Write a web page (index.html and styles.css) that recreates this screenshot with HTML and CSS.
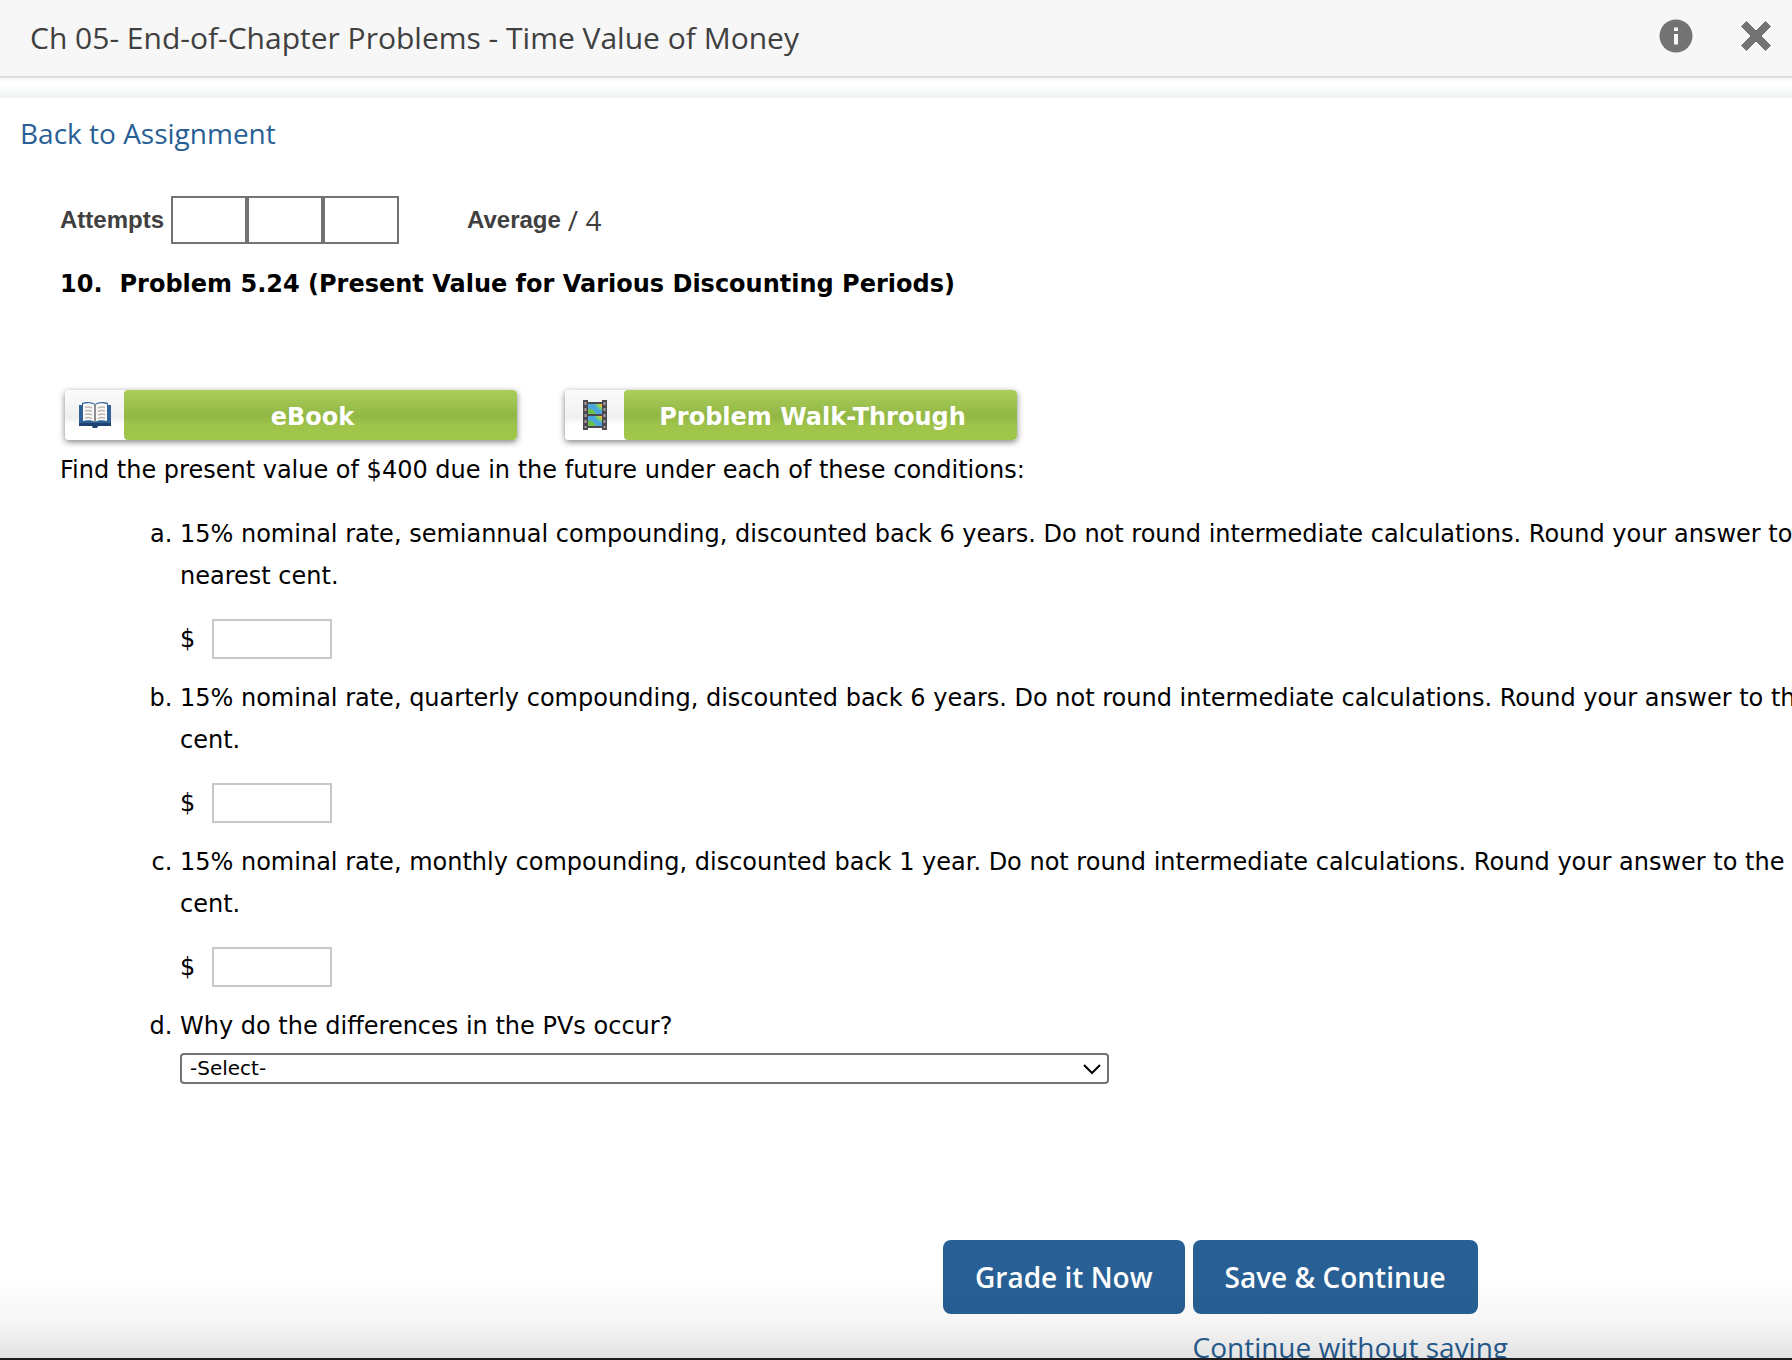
FILE: index.html
```html
<!DOCTYPE html>
<html lang="en">
<head>
<meta charset="utf-8">
<meta name="viewport" content="width=device-width, initial-scale=1">
<title>Ch 05- End-of-Chapter Problems - Time Value of Money</title>
<link rel="stylesheet" href="styles.css">
</head>
<body>
<header class="topbar">
  <h1 class="topbar-title">Ch 05- End-of-Chapter Problems - Time Value of Money</h1>
  <div class="topbar-actions">
    <button class="icon-button" type="button" aria-label="Information">
      <svg width="34" height="34" viewBox="0 0 34 34" aria-hidden="true"><circle cx="17" cy="17" r="16.5" fill="#737373"/><path d="M15 8.500h4v3.500h-4zM15 15h4v10.500h-4z" fill="#f7f7f7"/></svg>
    </button>
    <button class="icon-button" type="button" aria-label="Close">
      <svg width="32" height="32" viewBox="0 0 32 32" aria-hidden="true"><path d="M6.500 1.500 16 11l9.500-9.500 5 5L21 16l9.500 9.500-5 5L16 21l-9.500 9.500-5-5L11 16 1.500 6.500z" fill="#737373" stroke="#737373" stroke-linejoin="round"/></svg>
    </button>
  </div>
</header>
<main class="page">
  <div class="page-shade"></div>
  <nav class="back"><a class="link" href="#">Back to Assignment</a></nav>
  <section class="problem">
    <div class="attempts">
      <span class="score-label">Attempts</span>
      <div class="attempt-boxes"><span class="attempt-box"></span><span class="attempt-box"></span><span class="attempt-box"></span></div>
      <div class="average"><span class="score-label">Average</span><span>/ 4</span></div>
    </div>
    <h2 class="problem-title"><span>10.</span><span>Problem 5.24 (Present Value for Various Discounting Periods)</span></h2>
    <div class="resources">
      <button class="resource" type="button">
        <span class="resource-icon">
          <svg width="34" height="28" viewBox="0 0 34 28" aria-hidden="true"><path d="M1 4h3V2c5-2 10-1 13 1 3-2 8-3 13-1v2h3v20H20l-1 3h-4l-1-3H1z" fill="#2f6299"/><path d="M1 22h32v3H20l-1 2h-4l-1-2H1z" fill="#1d4271"/><path d="M5 3c4-1.500 9-1 12 1 3-2 8-2.500 12-1v17c-4-1-9-1-12 1-3-2-8-2-12-1z" fill="#fbfaf7"/><path d="M17 4v17" stroke="#8c8e91" stroke-width="2"/><path d="M7 6.500q4-1 7 .5M7 10q4-1 7 .5M7 13.500q4-1 7 .5M7 17q4-1 7 .5M20 7q3-1.500 7-.5M20 10.500q3-1.500 7-.5M20 14q3-1.500 7-.5M20 17.500q3-1.500 7-.5" stroke="#bdb8b6" stroke-width="1.500" fill="none"/></svg>
        </span>
        <span class="resource-label">eBook</span>
      </button>
      <button class="resource" type="button">
        <span class="resource-icon">
          <svg width="26" height="32" viewBox="0 0 26 32" aria-hidden="true"><path d="M1 1h5v2h14V1h5v30h-5v-2H6v2H1z" fill="#4c4850"/><path d="M6 5h14v10H6zM6 17h14v10H6z" fill="#4aa6dc"/><path d="M6 10q5-1 8 5H6zM6 22q5-1 8 5H6z" fill="#6cc04a"/><path d="M13 5h7v6q-5-1-7-6zM13 17h7v6q-5-1-7-6z" fill="#74cf73"/><path d="M16 5h4v4zM16 17h4v4z" fill="#e8bd3f"/><path d="M2.500 3h2v3h-2zm0 6h2v3h-2zm0 6h2v3h-2zm0 6h2v3h-2zm0 6h2v2h-2zm19-24h2v3h-2zm0 6h2v3h-2zm0 6h2v3h-2zm0 6h2v3h-2zm0 6h2v2h-2z" fill="#a5a0a5"/></svg>
        </span>
        <span class="resource-label">Problem Walk-Through</span>
      </button>
    </div>
    <p class="prompt">Find the present value of $400 due in the future under each of these conditions:</p>
    <ol class="questions">
      <li class="question">
        <p class="question-text" id="qa">15% nominal rate, semiannual compounding, discounted back 6 years. Do not round intermediate calculations. Round your answer to the<br>nearest cent.</p>
        <label class="answer">$ <input class="answer-input" type="text" aria-describedby="qa"></label>
      </li>
      <li class="question">
        <p class="question-text" id="qb">15% nominal rate, quarterly compounding, discounted back 6 years. Do not round intermediate calculations. Round your answer to the nearest<br>cent.</p>
        <label class="answer">$ <input class="answer-input" type="text" aria-describedby="qb"></label>
      </li>
      <li class="question">
        <p class="question-text" id="qc">15% nominal rate, monthly compounding, discounted back 1 year. Do not round intermediate calculations. Round your answer to the nearest<br>cent.</p>
        <label class="answer">$ <input class="answer-input" type="text" aria-describedby="qc"></label>
      </li>
      <li class="question">
        <label class="question-text" for="reason">Why do the differences in the PVs occur?</label>
        <div class="select-wrap">
          <select class="select" id="reason"><option>-Select-</option></select>
          <svg class="select-arrow" width="20" height="12" viewBox="0 0 20 12" aria-hidden="true"><path d="M2 2l8 8 8-8" fill="none" stroke="#000" stroke-width="2"/></svg>
        </div>
      </li>
    </ol>
  </section>
  <footer class="actions">
    <button class="primary" type="button">Grade it Now</button>
    <button class="primary" type="button">Save &amp; Continue</button>
    <a class="link skip" href="#">Continue without saving</a>
  </footer>
</main>
<div class="bottom-edge"></div>
</body>
</html>
```
FILE: styles.css
```css
* { box-sizing: border-box; }

body {
  margin: 0;
  height: 100vh;
  display: flex;
  flex-direction: column;
  overflow: hidden;
  position: relative;
  background: #fff;
  color: #000;
  font: 24px/42px "DejaVu Sans", Verdana, sans-serif;
}

h1, h2, p, ol { margin: 0; padding: 0; }
button, input, select { font: inherit; margin: 0; }
button { border: 0; padding: 0; cursor: pointer; }

.topbar {
  flex: none;
  display: flex;
  justify-content: space-between;
  align-items: center;
  padding: 17px 20px 17px 30px;
  background: #f7f7f7;
  border-bottom: 2px solid #dcdfde;
}
.topbar-title {
  color: #404040;
  font: 400 30px/42px "Open Sans", sans-serif;
}
.topbar-actions { display: flex; align-items: center; gap: 47px; }
.icon-button { display: flex; background: none; margin-bottom: 4px; }

.page {
  flex: 1;
  min-height: 0;
  overflow: auto;
  scrollbar-width: none;
}
.page-shade { height: 20px; background: linear-gradient(#f3f7f7, #fff 25%, #fcfdfd 50%, #edf2f2); }

.back { display: flex; padding: 14px 20px 0; }
.link {
  color: #286095;
  font: 400 28px/42px "Open Sans", sans-serif;
  text-decoration: none;
}

.problem { padding: 42px 60px 0; }
.attempts { display: flex; align-items: center; }
.score-label {
  color: #404040;
  font: 700 24px/42px "Liberation Sans", Arial, sans-serif;
}
.attempt-boxes { display: flex; margin: 0 68px 0 7px; }
.attempt-box { width: 76px; height: 48px; border: 2px solid #737373; }
.average { display: flex; gap: 7px; color: #404040; font: 400 28px/42px "Open Sans", sans-serif; }

.problem-title {
  display: flex;
  gap: 17px;
  margin-top: 19px;
  font-size: 24px;
  line-height: 42px;
}

.resources { display: flex; gap: 48px; margin: 85px 0 9px 5px; }
.resource {
  display: flex;
  width: 452px;
  height: 50px;
  border-radius: 4px;
  background: #fff;
  box-shadow: 0 2px 6px rgba(0, 0, 0, .5);
  overflow: hidden;
}
.resource-icon {
  width: 59px;
  height: 50px;
  display: grid;
  place-items: center;
  background: linear-gradient(#fbfbfb, #f0f0f0 55%, #fff 70%);
}
.resource-label {
  flex: 1;
  color: #fff;
  font-weight: 700;
  line-height: 54px;
  padding-right: 16px;
  border-radius: 4px;
  background: linear-gradient(#abce5b, #92b744 52%, #9fc44b 70%, #9fc74b);
}

.questions { margin-top: 22px; padding-left: 120px; list-style: lower-alpha; }
.question { margin-bottom: 18px; }
.question-text { white-space: nowrap; }
.answer { display: flex; align-items: center; gap: 17px; height: 40px; margin-top: 22px; width: max-content; }
.answer-input { width: 120px; height: 40px; padding: 0 8px; border: 2px solid #c8c8c8; border-radius: 0; background: #fff; }

.select-wrap { position: relative; width: 929px; margin-top: 6px; }
.select {
  display: block;
  width: 100%;
  height: 31px;
  padding: 0 8px;
  appearance: none;
  border: 2px solid #737373;
  border-radius: 4px;
  background: #fff;
  color: #000;
  font-size: 20px;
  line-height: 27px;
}
.select-arrow { position: absolute; right: 7px; top: 10px; pointer-events: none; }

.actions {
  display: grid;
  grid-template-columns: max-content max-content;
  gap: 12px 8px;
  padding: 138px 0 14px 943px;
}
.primary {
  height: 74px;
  padding: 0 32px;
  border-radius: 8px;
  background: #286095;
  color: #fff;
  font: 600 28px/42px "Open Sans", sans-serif;
}
.skip { grid-column: 2; width: 0; white-space: nowrap; }

/* The fade lies over the scrolled content at the window's foot. */
.bottom-edge {
  position: absolute;
  inset: auto 0 0;
  height: 84px;
  border-bottom: 2px solid #1c1a1c;
  background: linear-gradient(rgba(0, 0, 0, 0), rgba(0, 0, 0, .03) 50%, rgba(0, 0, 0, .11));
  pointer-events: none;
}
```
